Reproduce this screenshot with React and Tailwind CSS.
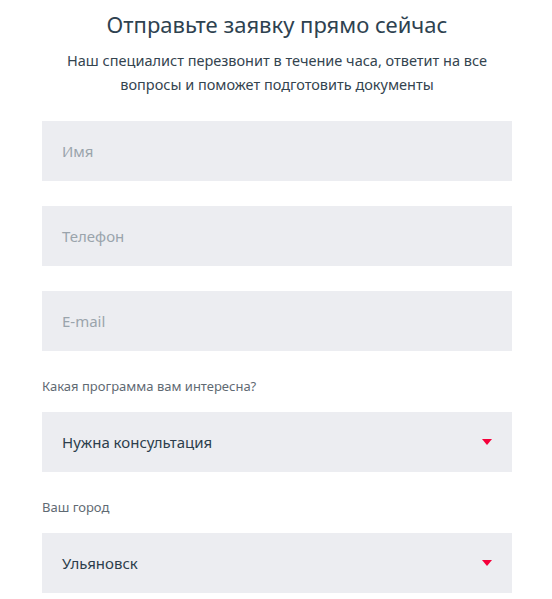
const Field = ({ placeholder }) => (
  <div className="h-[60px] bg-[#ecedf1] flex items-center px-5 text-[15px] text-[#9aa4ac]">
    {placeholder}
  </div>
);

const Select = ({ label, value }) => (
  <div className="flex flex-col">
    <p className="text-[13px] text-[#5f6a73] leading-5 mb-[16px]">{label}</p>
    <div className="h-[60px] bg-[#ecedf1] flex items-center justify-between pl-5 pr-[20px] text-[15px] text-[#2c3e4c]">
      <span>{value}</span>
      <svg width="10" height="6" viewBox="0 0 10 6">
        <path d="M0 0H10L5 6Z" fill="#f5003a" />
      </svg>
    </div>
  </div>
);

export default function App() {
  return (
    <div
      className="w-[552px] min-h-[599px] bg-white flex flex-col items-center pl-[2px]"
      style={{ fontFamily: '"Noto Sans", sans-serif' }}
    >
      <h1 className="mt-[6px] text-[22px] text-[#2e4250] leading-9">
        Отправьте заявку прямо сейчас
      </h1>
      <p className="mt-[6px] text-[14.5px] text-[#34444f] leading-6 text-center w-[440px]">
        Наш специалист перезвонит в течение часа, ответит на все вопросы и поможет подготовить документы
      </p>
      <div className="w-[470px] mt-[25px] flex flex-col gap-[25px]">
        <Field placeholder="Имя" />
        <Field placeholder="Телефон" />
        <Field placeholder="E-mail" />
      </div>
      <div className="w-[470px] mt-[25px] flex flex-col gap-[25px]">
        <Select label="Какая программа вам интересна?" value="Нужна консультация" />
        <Select label="Ваш город" value="Ульяновск" />
      </div>
    </div>
  );
}
